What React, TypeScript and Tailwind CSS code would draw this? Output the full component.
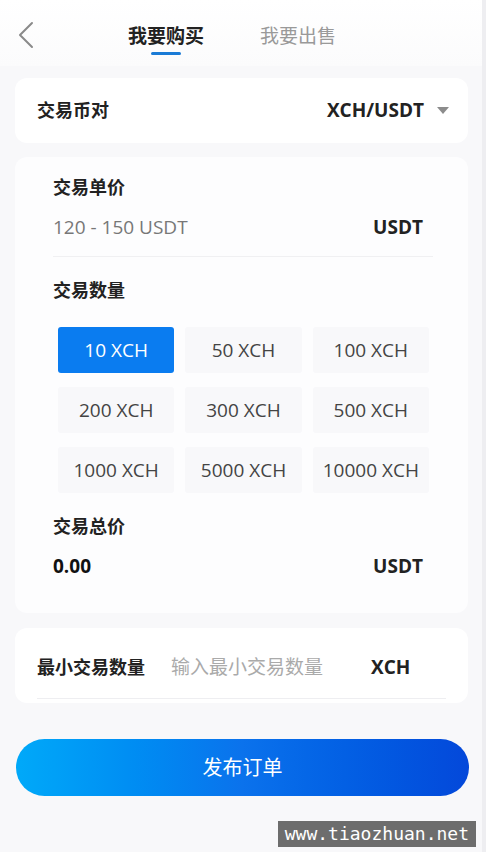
import { useState } from "react";

const amounts = [
  "10 XCH",
  "50 XCH",
  "100 XCH",
  "200 XCH",
  "300 XCH",
  "500 XCH",
  "1000 XCH",
  "5000 XCH",
  "10000 XCH",
];

const font = {
  fontFamily: '"Open Sans", "Noto Sans CJK SC", sans-serif',
};

export default function App() {
  const [tab, setTab] = useState(0);
  const [picked, setPicked] = useState(0);

  return (
    <div
      style={font}
      className="relative flex h-[852px] w-[486px] flex-col overflow-hidden border-r-4 border-[#eeeef1] bg-[#f8f8fa] text-[#222]"
    >
      {/* header */}
      <header className="flex h-[66px] items-center bg-gradient-to-b from-white to-[#fbfbfc] pt-[4px]">
        <button className="ml-[16px] flex h-[30px] w-[20px] items-center justify-center">
          <svg width="18" height="28" viewBox="0 0 18 28" fill="none">
            <path d="M15 2 L3 14 L15 26" stroke="#8a8a8a" strokeWidth="2" strokeLinecap="round" strokeLinejoin="round" />
          </svg>
        </button>
        <nav className="ml-[92px] flex gap-[56px] pt-[8px] text-[19px]">
          {["我要购买", "我要出售"].map((t, i) => (
            <button key={t} onClick={() => setTab(i)} className="relative flex flex-col items-center">
              <span className={tab === i ? "font-bold leading-[26px] text-[#222]" : "leading-[26px] text-[#999]"}>{t}</span>
              <span className={tab === i ? "mt-[3px] h-[3px] w-[30px] rounded-full bg-[#1a7bd6]" : "mt-[3px] h-[3px] w-[30px]"} />
            </button>
          ))}
        </nav>
      </header>

      {/* pair */}
      <section className="ml-[15px] mr-[14px] mt-[12px] flex h-[65px] items-center justify-between rounded-[12px] bg-white pl-[22px] pr-[19px]">
        <span className="text-[18px] font-bold">交易币对</span>
        <div className="flex items-center gap-[13px]">
          <span className="text-[19px] font-bold">XCH/USDT</span>
          <svg width="12" height="8" viewBox="0 0 12 8">
            <path d="M0 0 H12 L6 7 Z" fill="#8c8c8c" />
          </svg>
        </div>
      </section>

      {/* main card */}
      <section className="ml-[15px] mr-[14px] mt-[14px] flex flex-col rounded-[12px] bg-[#fdfdfe] pl-[38px] pr-[35px] pt-[18px] pb-[34px]">
        <h3 className="text-[18px] font-bold leading-[24px]">交易单价</h3>
        <div className="mt-[15px] flex items-center justify-between border-b border-[#f0f0f2] pb-[16px] pr-[10px] leading-[26px]">
          <span className="text-[19px] text-[#777]">120 - 150 USDT</span>
          <span className="text-[19px] font-bold">USDT</span>
        </div>

        <h3 className="mt-[21px] text-[18px] font-bold leading-[24px]">交易数量</h3>
        <div className="mt-[25px] grid grid-cols-3 gap-x-[11px] gap-y-[14px] pl-[5px] pr-[4px]">
          {amounts.map((a, i) => (
            <button
              key={a}
              onClick={() => setPicked(i)}
              className={
                picked === i
                  ? "flex h-[46px] items-center justify-center rounded-[3px] bg-[#0a7cf0] text-[19px] text-white"
                  : "flex h-[46px] items-center justify-center rounded-[3px] bg-[#f8f8fa] text-[19px] text-[#444]"
              }
            >
              {a}
            </button>
          ))}
        </div>

        <h3 className="mt-[21px] text-[18px] font-bold leading-[24px]">交易总价</h3>
        <div className="mt-[15px] flex items-center justify-between pr-[10px] leading-[26px]">
          <span className="text-[19px] font-bold text-[#111]">0.00</span>
          <span className="text-[19px] font-bold">USDT</span>
        </div>
      </section>

      {/* min amount */}
      <section className="ml-[15px] mr-[14px] mt-[15px] rounded-[12px] bg-white px-[22px] pt-[9px] pb-[4px]">
        <div className="flex h-[62px] items-center border-b border-[#eeeef1]">
          <span className="w-[134px] text-[18px] font-bold">最小交易数量</span>
          <input
            placeholder="输入最小交易数量"
            className="w-[200px] bg-transparent text-[19px] outline-none placeholder:text-[#aaa]"
          />
          <span className="text-[19px] font-bold">XCH</span>
        </div>
      </section>

      {/* submit */}
      <button className="ml-[16px] mr-[13px] mt-[36px] h-[57px] rounded-full bg-gradient-to-r from-[#00a9f9] via-[#0b72ec] to-[#0448da] text-[20px] text-white">
        发布订单
      </button>

      <div
        style={{ fontFamily: '"DejaVu Sans Mono", monospace' }}
        className="absolute bottom-[5px] right-[6px] bg-[#6d6d6d] px-[7px] text-[18px] leading-[26px] text-white"
      >
        www.tiaozhuan.net
      </div>
    </div>
  );
}
